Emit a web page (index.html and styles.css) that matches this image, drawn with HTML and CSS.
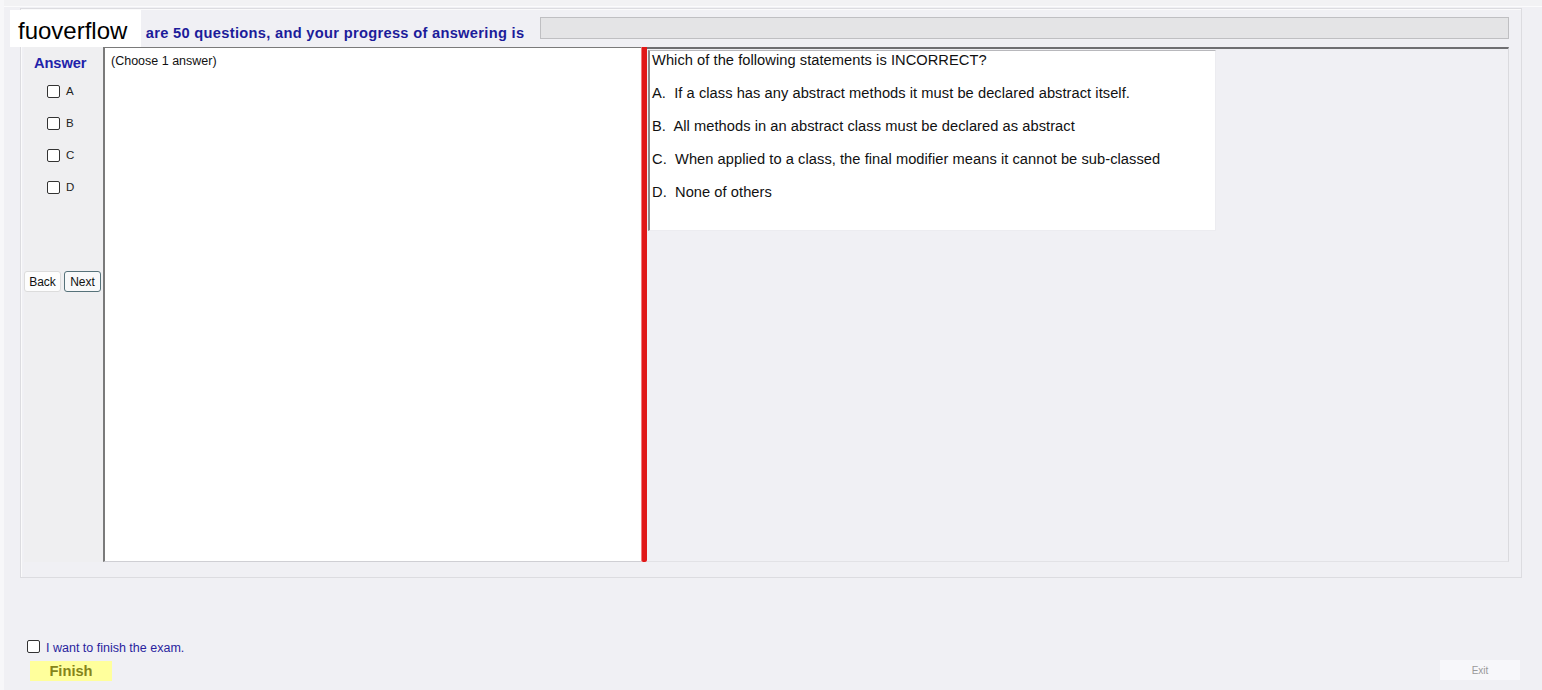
FILE: index.html
```html
<!DOCTYPE html>
<html>
<head>
<meta charset="utf-8">
<title>Exam</title>
<link rel="stylesheet" href="styles.css">
</head>
<body>
<div class="page">
  <div class="topstrip"></div>
  <div class="group">
    <div class="header">
      <div class="header-text"><span class="lead">There</span> are 50 questions, and your progress of answering is</div>
      <div class="progress"></div>
    </div>
    <div class="content">
      <div class="answer-col">
        <div class="answer-title">Answer</div>
        <label class="opt"><span class="box"></span><span>A</span></label>
        <label class="opt"><span class="box"></span><span>B</span></label>
        <label class="opt"><span class="box"></span><span>C</span></label>
        <label class="opt"><span class="box"></span><span>D</span></label>
        <div class="nav">
          <button class="btn">Back</button>
          <button class="btn btn-focus">Next</button>
        </div>
      </div>
      <div class="left-panel">(Choose 1 answer)</div>
      <div class="splitter"></div>
      <div class="right-panel">
        <div class="question">
          <p>Which of the following statements is INCORRECT?</p>
          <p>A.&nbsp; If a class has any abstract methods it must be declared abstract itself.</p>
          <p>B.&nbsp; All methods in an abstract class must be declared as abstract</p>
          <p>C.&nbsp; When applied to a class, the final modifier means it cannot be sub-classed</p>
          <p>D.&nbsp; None of others</p>
        </div>
      </div>
    </div>
  </div>
  <div class="bottom">
    <div class="finish-col">
      <label class="finish-check"><span class="box"></span><span>I want to finish the exam.</span></label>
      <button class="finish">Finish</button>
    </div>
    <button class="exit">Exit</button>
  </div>
  <div class="watermark">fuoverflow</div>
</div>
</body>
</html>
```

FILE: styles.css
```css
* { box-sizing: border-box; }
html, body { margin: 0; padding: 0; }
body {
  background: #f0f0f4;
  font-family: "Liberation Sans", Arial, sans-serif;
  color: #111;
}
.page {
  position: relative;
  width: 1542px;
  height: 690px;
  overflow: hidden;
  border-left: 4px solid #f7f7f9;
  background: #f0f0f4;
}
.topstrip {
  height: 7px;
  background: #f2f2f4;
  border-bottom: 1px solid #fbfbfc;
  margin-left: -4px;
}
.group {
  margin: 1px 0 0 16px;
  width: 1502px;
  border: 1px solid #dcdce0;
  box-shadow: inset 1px 1px 0 #fafafb;
  padding: 0 12px 15px 3px;
}
.header {
  display: flex;
  align-items: center;
  padding: 8px 0 8px 72px;
  height: 38px;
}
.header-text {
  font-weight: bold;
  font-size: 14.67px;
  letter-spacing: 0.3px;
  color: #1c1c9a;
  white-space: nowrap;
  padding-top: 9px;
}
.lead { margin-right: 4px; }
.progress {
  flex: 1;
  height: 22px;
  margin-left: 16px;
  background: #e4e4e6;
  border: 1px solid #bfbfc2;
}
.content {
  display: flex;
  height: 515px;
}
.answer-col {
  width: 79px;
  background: #efeff1;
  display: flex;
  flex-direction: column;
  align-items: flex-start;
}
.answer-title {
  font-weight: bold;
  font-size: 14.67px;
  letter-spacing: -0.1px;
  color: #2222aa;
  margin: 8px 0 0 10px;
  line-height: 17px;
}
.opt {
  display: flex;
  align-items: center;
  height: 16px;
  margin-left: 23px;
  font-size: 11.5px;
  color: #222;
  margin-top: 16px;
}
.answer-title + .opt { margin-top: 11px; }
.box {
  display: inline-block;
  width: 13px;
  height: 13px;
  border: 1px solid #333;
  border-radius: 2px;
  background: #fff;
  margin-right: 6px;
}
.nav {
  display: flex;
  gap: 3px;
  margin-top: 76px;
}
.btn {
  font-family: "Liberation Sans", Arial, sans-serif;
  font-size: 12px;
  height: 21px;
  width: 37px;
  padding: 0;
  background: #fdfdfd;
  border: 1px solid #dcdcdc;
  border-radius: 3px;
  color: #111;
}
.btn-focus {
  border: 1px solid #56727a;
  background: #f8f9fa;
}
.left-panel {
  width: 538px;
  background: #fff;
  border-left: 2px solid #7a7a7a;
  border-top: 1px solid #7a7a7a;
  border-bottom: 1px solid #cfcfd4;
  padding: 6px 6px;
  font-size: 12.5px;
  line-height: 15px;
  color: #111;
}
.splitter {
  width: 6px;
  background: #e01818;
  border-left: 1px solid #f07a7a;
  border-radius: 0 0 2px 2px;
}
.right-panel {
  flex: 1;
  border-top: 2px solid #6f6f72;
  border-right: 1px solid #dadade;
  border-bottom: 1px solid #e2e2e6;
  background: #f0f0f4;
  padding: 1px 0 0 1px;
}
.question {
  width: 568px;
  height: 181px;
  background: #fff;
  border-left: 2px solid #8a8a8a;
  border-top: 1px solid #b8b8bc;
  border-right: 1px solid #ececf0;
  border-bottom: 1px solid #ececf0;
  padding: 0 0 0 2px;
  font-size: 14.67px;
  letter-spacing: 0.05px;
  color: #111;
}
.question p {
  margin: 0 0 15px 0;
  line-height: 18px;
  white-space: nowrap;
}
.bottom {
  display: flex;
  justify-content: space-between;
  align-items: flex-end;
  padding: 61px 22px 0 23px;
}
.finish-col {
  display: flex;
  flex-direction: column;
  align-items: flex-start;
}
.finish-check {
  display: flex;
  align-items: center;
  height: 16px;
  font-size: 12.5px;
  color: #2a1f9e;
}
.finish-check .box {
  margin-right: 6px;
  margin-top: -2px;
  border-color: #333;
}
.finish-check span + span { padding-top: 2px; }
.finish {
  margin: 6px 0 0 3px;
  width: 82px;
  height: 20px;
  background: #ffff9c;
  border: none;
  font-family: "Liberation Sans", Arial, sans-serif;
  font-weight: bold;
  font-size: 14.67px;
  color: #85851a;
  padding: 0 0 0 0;
  text-align: center;
  line-height: 20px;
}
.exit {
  width: 80px;
  height: 20px;
  margin-bottom: 1px;
  background: #f7f7fa;
  border: none;
  font-family: "Liberation Sans", Arial, sans-serif;
  font-size: 10px;
  color: #9a9a9a;
  padding: 0;
}
.watermark {
  position: absolute;
  left: 6px;
  top: 10px;
  width: 131px;
  height: 37px;
  background: #fff;
  font-size: 24px;
  color: #000;
  padding: 8px 0 0 8px;
  line-height: 26px;
}
```
